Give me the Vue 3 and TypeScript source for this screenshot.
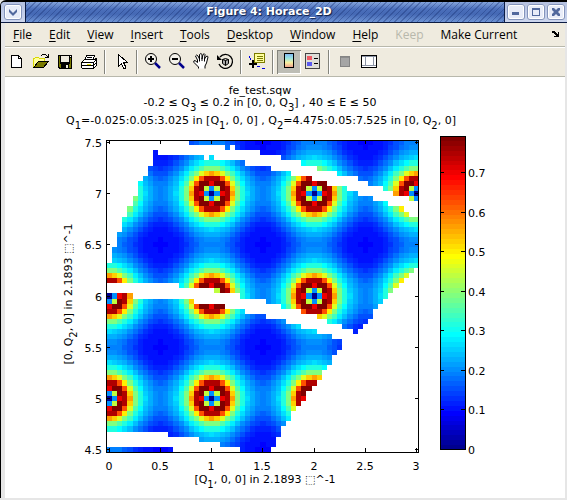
<script setup lang="ts">
interface MenuItem { key: string; rest: string; disabled?: boolean; plain?: boolean }
interface Cell { x: number; y: number; w: number; h: number; fill: string }

const menus: MenuItem[] = [
  { key: 'F', rest: 'ile' },
  { key: 'E', rest: 'dit' },
  { key: 'V', rest: 'iew' },
  { key: 'I', rest: 'nsert' },
  { key: 'T', rest: 'ools' },
  { key: 'D', rest: 'esktop' },
  { key: 'W', rest: 'indow' },
  { key: 'H', rest: 'elp' },
  { key: 'K', rest: 'eep', disabled: true, plain: true },
  { key: 'M', rest: 'ake Current', plain: true },
]

/* 64-step jet colour map */
function jet(i: number): string {
  const ch = (centre: number): number => {
    const v = Math.min(1, Math.max(0, (24 - Math.abs(i - centre)) / 16))
    return Math.round(v * 255)
  }
  return `rgb(${ch(47)}, ${ch(31)}, ${ch(15)})`
}

/* Colour index by distance (in bins) from the nearest lattice point; row d starts at column d */
const falloff: number[][] = [
  [0, 16, 56, 60, 45, 31, 25, 21, 18, 16, 15],
  [35, 63, 60, 42, 31, 25, 20, 18, 16, 15],
  [63, 50, 37, 28, 23, 19, 17, 15, 15],
  [40, 31, 25, 21, 18, 16, 14, 13],
  [27, 22, 19, 16, 14, 12, 12],
  [19, 16, 14, 12, 11, 10],
  [14, 12, 10, 9, 9],
  [10, 9, 8, 8],
  [8, 8, 8],
  [8, 7],
  [7],
]

/* Measured bins for each row, from 7.5 down to 4.5: [first, end) pairs */
const coverage: number[][] = [
  [16, 61], [23, 24, 25, 61], [9, 10, 30, 61], [9, 19, 20, 21, 34, 61], [9, 27, 38, 61],
  [8, 32, 41, 61], [8, 36, 45, 61], [7, 40, 49, 61], [6, 43, 51, 61], [6, 47, 54, 61],
  [6, 49, 56, 61], [5, 52, 59, 61], [5, 55], [4, 58], [4, 59],
  [3, 61], [3, 61], [3, 61], [2, 61], [2, 61],
  [2, 61], [1, 61], [1, 61], [1, 61], [0, 61],
  [0, 60], [0, 59], [0, 58], [14, 57], [21, 56],
  [0, 5, 26, 55], [0, 17, 31, 54], [0, 23, 34, 53], [0, 27, 38, 52], [0, 31, 41, 52],
  [0, 35, 43, 51], [0, 38, 46, 50], [0, 41, 48, 49], [0, 44], [0, 46],
  [0, 46], [0, 45], [0, 44], [0, 44], [0, 43],
  [0, 42], [0, 42], [0, 41], [0, 40], [0, 39],
  [0, 39], [0, 38], [0, 37], [0, 36], [0, 36],
  [0, 35], [0, 34], [12, 34], [18, 33], [22, 33],
  [0, 13, 26, 32],
]

const plot = { left: 107, top: 140, size: 312, bins: 61 }
const edge = (n: number): number => Math.round((n * plot.size) / plot.bins)

function level(col: number, row: number): number {
  const fold = (n: number): number => {
    const m = ((n % 20) + 20) % 20
    return m > 10 ? 20 - m : m
  }
  const a = fold(col)
  const b = fold(row - 10)
  return falloff[Math.min(a, b)][Math.abs(a - b)]
}

const cells: Cell[] = []
coverage.forEach((spans, row) => {
  for (let s = 0; s < spans.length; s += 2) {
    for (let col = spans[s]; col < spans[s + 1]; col++) {
      cells.push({
        x: plot.left + edge(col),
        y: plot.top + edge(row),
        w: edge(col + 1) - edge(col),
        h: edge(row + 1) - edge(row),
        fill: jet(level(col, row)),
      })
    }
  }
})

const xTicks = [0, 0.5, 1, 1.5, 2, 2.5, 3].map((v) => ({ v, x: Math.round(109 + v * 102.3) }))
const yTicks = [4.5, 5, 5.5, 6, 6.5, 7, 7.5].map((v) => ({ v, y: Math.round(449 - (v - 4.5) * 102.3) }))

const bar = { left: 440, top: 136, width: 25, height: 314 }
const bands = Array.from({ length: 64 }, (_, i) => {
  const y0 = Math.round(((63 - i) * bar.height) / 64)
  const y1 = Math.round(((64 - i) * bar.height) / 64)
  return { y: bar.top + y0, h: y1 - y0, fill: jet(i) }
})
const barTicks = [0, 0.1, 0.2, 0.3, 0.4, 0.5, 0.6, 0.7].map((v) => ({ v, y: Math.round(449 - v * 395.5) }))
</script>

<template>
  <main class="window">
    <header class="titlebar">
      <div class="corner">
        <button class="wm" aria-label="Window menu">
          <svg width="18" height="16"><path d="M5 5l4 4 4-4v3l-4 4-4-4z" fill="#51689d" /></svg>
        </button>
      </div>
      <h1 class="caption">Figure 4: Horace_2D</h1>
      <div class="controls">
        <button class="wm" aria-label="Minimize">
          <svg width="18" height="16"><path d="M5 8h7v3H5z" fill="#51689d" /></svg>
        </button>
        <button class="wm" aria-label="Maximize">
          <svg width="18" height="16"><path d="M5 4h8v8H5zM6 6v5h6V6z" fill="#51689d" fill-rule="evenodd" /></svg>
        </button>
        <button class="wm" aria-label="Close">
          <svg width="18" height="16"><path d="M5 4h2l2 2 2-2h2v2l-2 2 2 2v2h-2l-2-2-2 2H5v-2l2-2-2-2z" fill="#51689d" /></svg>
        </button>
      </div>
    </header>

    <div class="body">
      <nav class="menubar">
        <button v-for="m in menus" :key="m.key" class="menu" :disabled="m.disabled">
          <span :class="{ mnemonic: !m.plain }">{{ m.key }}</span>{{ m.rest }}
        </button>
        <button class="dock" aria-label="Dock figure">
          <svg width="8" height="7" shape-rendering="crispEdges">
            <path d="M0 0h3v1h1v1h1v1h1v-2h1v5h-5v-1h2v-1h-1v-1h-1v-1h-2z" fill="#000" />
          </svg>
        </button>
      </nav>

      <div class="toolbar">
        <button class="tool" aria-label="New figure">
          <svg viewBox="0 0 24 24" shape-rendering="crispEdges">
            <path d="M6.500 5.500h7l3 3v9h-10z" fill="#fff" stroke="#000" />
            <path d="M13.500 5.500v3h3" fill="none" stroke="#000" />
          </svg>
        </button>
        <button class="tool" aria-label="Open file">
          <svg viewBox="0 0 24 24" shape-rendering="crispEdges">
            <path d="M4.500 17.500v-9h1l1-1h3l1 1h5v3h-6z" fill="#ffff9c" stroke="#d8d800" />
            <path d="M4.500 17.500l5-6h10l-5 6z" fill="#7b7b00" stroke="#000" />
            <path d="M11 6h1v-1h1v-1h4v1h1v1h1v-2h1v4h-4v-1h2v-1h-1v-1h-4v1h-2z" fill="#000" />
          </svg>
        </button>
        <button class="tool" aria-label="Save figure">
          <svg viewBox="0 0 24 24" shape-rendering="crispEdges">
            <path d="M5 5h14v14H6l-1-1z" fill="#000" />
            <path d="M6 6h1v8h10v-6h1v10h-2v-4h-8v4h-1l-1-1z" fill="#7b7b00" />
            <path d="M8 6h8v6H8z" fill="#efebdf" />
            <path d="M17 6h1v1h-1z" fill="#fff" />
            <path d="M13 15h2v3h-2z" fill="#efebdf" />
          </svg>
        </button>
        <button class="tool" aria-label="Print figure">
          <svg viewBox="0 0 24 24" shape-rendering="crispEdges">
            <path d="M9.500 5.500h8l-2 5h-8z" fill="#fff" stroke="#000" />
            <path d="M10 7.500h5M9 9.500h5" stroke="#000" />
            <path d="M4.500 12.500l3-3h10l2-1v7l-3 3h-11l-1-1z" fill="#fff" stroke="#000" />
            <path d="M5 12.500h12M5 15.500h12M16.500 12v6M17 12l3-3M17 15l3-3" stroke="#000" />
            <path d="M10 14h4v1h-4z" fill="#d8d800" />
          </svg>
        </button>
        <i class="rule"></i>
        <button class="tool" aria-label="Edit plot">
          <svg viewBox="0 0 24 24" shape-rendering="crispEdges">
            <path d="M9.500 4.500v12l3-3 2 5h2v-2l-2-4h4z" fill="#fff" stroke="#000" />
          </svg>
        </button>
        <i class="rule"></i>
        <button class="tool" aria-label="Zoom in">
          <svg viewBox="0 0 24 24">
            <circle cx="10" cy="9" r="5.500" fill="#f3f1ea" stroke="#000" />
            <path d="M7 8h2V6h2v2h2v2h-2v2H9v-2H7z" fill="#000" />
            <path d="M14 13l5 5" stroke="#00008b" stroke-width="2.500" />
          </svg>
        </button>
        <button class="tool" aria-label="Zoom out">
          <svg viewBox="0 0 24 24">
            <circle cx="10" cy="9" r="5.500" fill="#f3f1ea" stroke="#000" />
            <path d="M7 8h6v2H7z" fill="#000" />
            <path d="M14 13l5 5" stroke="#00008b" stroke-width="2.500" />
          </svg>
        </button>
        <button class="tool" aria-label="Pan">
          <svg viewBox="0 0 24 24">
            <path d="M9.500 18.500v-1.500L5 12.500q-1-2 1-2l2.500 2V10L6.500 6q1-2 2.500 0l1.500 3V4.500q1.500-2 2.500 0V9l1-4.500q1.500-1.500 2 0L15.500 9l1.500-2.500q2-1 2 .5l-1.500 6-1.500 3v2.500" fill="#fff" stroke="#000" />
            <path d="M10.500 9v2.500M13 8.500V11M15.500 9v2.500" stroke="#000" />
          </svg>
        </button>
        <button class="tool" aria-label="Rotate 3D">
          <svg viewBox="0 0 24 24">
            <path d="M7 7a7 7 0 1 1-1 7" fill="none" stroke="#000" stroke-width="1.300" />
            <path d="M4 5v5h5z" fill="#000" />
            <path d="M9.500 9.500l3-1 3 1v4l-3 2-3-2zl3 1 3-1M12.500 10.500v5" fill="#aaa" stroke="#000" />
          </svg>
        </button>
        <i class="rule"></i>
        <button class="tool" aria-label="Data cursor">
          <svg viewBox="0 0 24 24" shape-rendering="crispEdges">
            <path d="M4 6l2 4M12 16l3 1M17 18h3" stroke="#0000e0" fill="none" />
            <path d="M9.500 12.500v-9h10v9z" fill="#ffff9c" stroke="#7b7b00" />
            <path d="M12 6.500h6M12 8.500h6M12 10.500h6" stroke="#7b7b00" />
            <path d="M7 10h2v3h3v2H9v3H7v-3H4v-2h3z" fill="#000" />
          </svg>
        </button>
        <i class="rule"></i>
        <button class="tool pressed" aria-label="Insert colorbar" aria-pressed="true">
          <svg viewBox="0 0 24 24" shape-rendering="crispEdges">
            <defs>
              <linearGradient id="mini" x1="0" y1="0" x2="0" y2="1">
                <stop offset="0" stop-color="#7db4f4" />
                <stop offset="0.350" stop-color="#9ce6e0" />
                <stop offset="0.650" stop-color="#f6efa0" />
                <stop offset="1" stop-color="#f09a8c" />
              </linearGradient>
            </defs>
            <path d="M7.500 3.500h9v14h-9z" fill="url(#mini)" stroke="#000" />
          </svg>
        </button>
        <button class="tool" aria-label="Insert legend">
          <svg viewBox="0 0 24 24" shape-rendering="crispEdges">
            <path d="M4.500 3.500h14v15h-14z" fill="#deded8" stroke="#444" />
            <path d="M6 6h5v4H6z" fill="#f05a64" />
            <path d="M6 12h5v4H6z" fill="#5a5af0" />
            <path d="M13 8.500h4M13 13.500h4" stroke="#000" />
          </svg>
        </button>
        <i class="rule"></i>
        <button class="tool" aria-label="Hide plot tools">
          <svg viewBox="0 0 24 24" shape-rendering="crispEdges">
            <path d="M7.500 6.500h9v10h-9z" fill="#a5a5a5" stroke="#848484" />
            <path d="M8 7.500h8" stroke="#8c8c8c" />
          </svg>
        </button>
        <button class="tool" aria-label="Show plot tools">
          <svg viewBox="0 0 24 24" shape-rendering="crispEdges">
            <path d="M4.500 5.500h15v12h-15z" fill="#fff" stroke="#000" />
            <path d="M5 6.500h14M5 15.500h14M8.500 6v10M16.500 6v10" stroke="#8c94a5" />
          </svg>
        </button>
      </div>

      <svg class="figure" viewBox="5 77 560 421" role="img" aria-label="fe_test.sqw">
        <g class="label" text-anchor="middle">
          <text x="260" y="94">fe_test.sqw</text>
          <text x="260" y="106">-0.2 ≤ Q<tspan class="sub" dy="5">3</tspan><tspan dy="-5"> ≤ 0.2 in [0, 0, Q</tspan><tspan class="sub" dy="5">3</tspan><tspan dy="-5">] , 40 ≤ E ≤ 50</tspan></text>
          <text x="261" y="124">Q<tspan class="sub" dy="5">1</tspan><tspan dy="-5">=-0.025:0.05:3.025 in [Q</tspan><tspan class="sub" dy="5">1</tspan><tspan dy="-5">, 0, 0] , Q</tspan><tspan class="sub" dy="5">2</tspan><tspan dy="-5">=4.475:0.05:7.525 in [0, Q</tspan><tspan class="sub" dy="5">2</tspan><tspan dy="-5">, 0]</tspan></text>
          <text x="265" y="483">[Q<tspan class="sub" dy="5">1</tspan><tspan dy="-5">, 0, 0] in 2.1893 ⬚^-1</tspan></text>
          <text transform="translate(72 294) rotate(-90)">[0, Q<tspan class="sub" dy="5">2</tspan><tspan dy="-5">, 0] in 2.1893 ⬚^-1</tspan></text>
        </g>

        <g shape-rendering="crispEdges">
          <rect v-for="(c, i) in cells" :key="i" :x="c.x" :y="c.y" :width="c.w" :height="c.h" :fill="c.fill" />
          <rect x="106.500" y="140.500" width="312" height="312" class="axes" />
          <template v-for="t in xTicks" :key="t.v">
            <path :d="`M${t.x}.5 141v3M${t.x}.5 452v-4`" class="axes" />
          </template>
          <template v-for="t in yTicks" :key="t.v">
            <path :d="`M107 ${t.y}.5h3M418 ${t.y}.5h-3`" class="axes" />
          </template>
          <rect v-for="b in bands" :key="b.fill" :x="bar.left" :y="b.y" :width="bar.width" :height="b.h" :fill="b.fill" />
          <rect x="440.500" y="136.500" width="25" height="313" class="axes" />
          <path v-for="t in barTicks" :key="t.v" :d="`M441 ${t.y}.5h3M465 ${t.y}.5h-4`" class="axes" />
        </g>

        <g class="label">
          <text v-for="t in xTicks" :key="t.v" :x="t.x" y="470" text-anchor="middle">{{ t.v }}</text>
          <text v-for="t in yTicks" :key="t.v" x="102" :y="t.y + 5" text-anchor="end">{{ t.v }}</text>
          <text v-for="t in barTicks" :key="t.v" x="468" :y="t.y + 5">{{ t.v }}</text>
        </g>
      </svg>
    </div>
  </main>
</template>

<style>
body {
  margin: 0;
  background: #e6e6e6;
}
</style>

<style scoped>
.window {
  border-left: 1px solid #000;
  border-top: 2px solid #000;
  border-radius: 6px 0 0 0;
  background: #e6e6e6;
  font-family: "Open Sans", "Noto Sans", sans-serif;
  font-size: 12px;
  color: #000;
}
button {
  margin: 0;
  padding: 0;
  border: 0;
  background: none;
  font: inherit;
  color: inherit;
}
.titlebar {
  display: flex;
  height: 20px;
  border-bottom: 1px solid #0c1c44;
  background:
    repeating-linear-gradient(135deg, rgba(20, 44, 110, 0.35) 0 1px, transparent 1px 4px),
    linear-gradient(#84a4dc, #4c70bc 35%, #4468b4 60%, #6c92d4);
  border-radius: 4px 0 0 0;
}
.corner,
.controls {
  display: flex;
  align-items: center;
  gap: 2px;
  background: linear-gradient(#b4c0e0, #ccd6ee);
}
.corner {
  padding: 0 3px;
  border-right: 1px solid #0c1c44;
  border-radius: 4px 0 0 0;
}
.controls {
  padding: 0 2px;
  border-left: 1px solid #0c1c44;
}
.wm {
  display: grid;
  width: 18px;
  height: 16px;
  border-radius: 3px;
  background: #e8ecf8;
  box-shadow: inset 0 0 0 1px #8494bc, inset 0 0 0 2px #fff;
}
.caption {
  flex: 1;
  margin: 0;
  padding-left: 8px;
  text-align: center;
  font: bold 11px/20px "DejaVu Sans", sans-serif;
  color: #fff;
  text-shadow: 1px 1px 1px #0c1c44;
}
.body {
  margin: 0 2px 2px 4px;
  background: #fff;
}
.menubar {
  display: flex;
  align-items: center;
  gap: 17px;
  height: 23px;
  padding: 0 5px 0 8px;
  border-bottom: 1px solid #b8b8ac;
  background: #efebdf;
}
.menu {
  white-space: nowrap;
}
.menu:disabled {
  color: #b8b8ac;
}
.mnemonic {
  text-decoration: underline;
  text-underline-offset: 2px;
}
.dock {
  display: grid;
  margin-left: auto;
}
.toolbar {
  display: flex;
  align-items: center;
  height: 28px;
  border-top: 1px solid #fff;
  border-bottom: 1px solid #b8b8ac;
  background: #efebdf;
}
.tool {
  display: grid;
  width: 24px;
  height: 24px;
}
.tool svg {
  width: 24px;
  height: 24px;
}
.pressed {
  background: #bdbdb5;
  box-shadow: inset 1px 1px 0 #84847c, inset -1px -1px 0 #fff;
}
.rule {
  width: 1px;
  height: 24px;
  margin: 0 3px;
  background: #84847c;
  border-right: 1px solid #fff;
}
.figure {
  display: block;
  width: 100%;
}
.label {
  font-family: "DejaVu Sans", sans-serif;
  font-size: 11px;
  white-space: pre;
}
.sub {
  font-size: 10px;
}
.axes {
  fill: none;
  stroke: #000;
}
</style>
